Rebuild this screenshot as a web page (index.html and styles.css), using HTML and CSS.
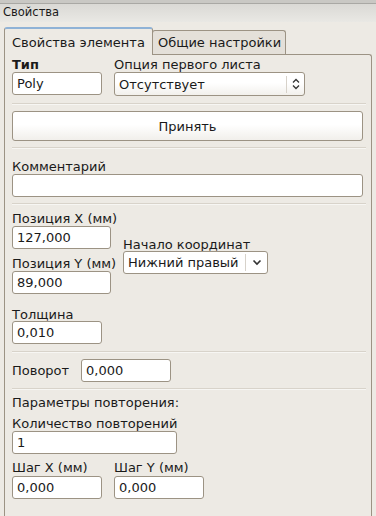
FILE: index.html
```html
<!DOCTYPE html>
<html lang="ru">
<head>
<meta charset="UTF-8" />
<meta name="viewport" content="width=device-width,initial-scale=1" />
<title>Свойства</title>
<link rel="stylesheet" href="styles.css">
</head>
<body>
  <div class="titlebar">Свойства</div>

  <div class="notebook">
    <div class="tabs">
      <div class="tab active">Свойства элемента</div>
      <div class="tab">Общие настройки</div>
    </div>

    <div class="panel">
      <!-- TYPE / FIRST SHEET -->
      <div class="row top-row">
        <div class="field">
          <label class="bold">Тип</label>
          <input type="text" class="w90" value="Poly" />
        </div>
        <div class="field">
          <label>Опция первого листа</label>
          <div class="combo w192">
            <span>Отсутствует</span>
            <span class="combo-btn">
              <svg width="8" height="12" viewBox="0 0 8 12"><path d="M1 4.5 L4 1.5 L7 4.5 M1 7.5 L4 10.5 L7 7.5" fill="none" stroke="#333" stroke-width="1.3"/></svg>
            </span>
          </div>
        </div>
      </div>

      <hr class="sep s-top" />

      <button type="button" class="btn">Принять</button>

      <hr class="sep s-btn" />

      <div class="field comment">
        <label>Комментарий</label>
        <input type="text" class="full" value="" />
      </div>

      <hr class="sep s-comment" />

      <!-- POSITION -->
      <div class="row pos-row">
        <div class="col">
          <div class="field">
            <label>Позиция X (мм)</label>
            <input type="text" class="w100" value="127,000" />
          </div>
          <div class="field pos-y">
            <label>Позиция Y (мм)</label>
            <input type="text" class="w100" value="89,000" />
          </div>
        </div>
        <div class="field origin">
          <label>Начало координат</label>
          <div class="combo w145 flat">
            <span>Нижний правый</span>
            <span class="combo-btn">
              <svg width="10" height="7" viewBox="0 0 10 7"><path d="M1.5 1.5 L5 5 L8.5 1.5" fill="none" stroke="#333" stroke-width="1.6"/></svg>
            </span>
          </div>
        </div>
      </div>

      <div class="field thick">
        <label>Толщина</label>
        <input type="text" class="w90" value="0,010" />
      </div>

      <hr class="sep s-thick" />

      <div class="row rotate">
        <label>Поворот</label>
        <input type="text" class="w90" value="0,000" />
      </div>

      <hr class="sep s-rotate" />

      <!-- REPEAT -->
      <div class="repeat">
        <div class="caption">Параметры повторения:</div>
        <div class="field count">
          <label>Количество повторений</label>
          <input type="text" class="w165" value="1" />
        </div>
        <div class="row steps">
          <div class="field">
            <label>Шаг X (мм)</label>
            <input type="text" class="w90" value="0,000" />
          </div>
          <div class="field">
            <label>Шаг Y (мм)</label>
            <input type="text" class="w90" value="0,000" />
          </div>
        </div>
      </div>
    </div>
  </div>
</body>
</html>
```

FILE: styles.css
```css
:root{
  --bg:#edeae4; --border:#9c9384; --line:#d8d3ca; --text:#1a1a1a;
}
*{box-sizing:border-box;margin:0;padding:0;
  font-family:"DejaVu Sans",Verdana,sans-serif}

body{
  background:var(--bg);
  color:var(--text);
  font-size:13px;
  width:376px;height:516px;overflow:hidden;
}

.titlebar{
  height:22px;
  border-top:3px solid #c9c8c4;
  box-shadow:inset 0 1px 0 #a9a8a4;
  background:linear-gradient(#d9d8d4,#e9e8e4);
  font-size:11.5px;
  line-height:18px;
  padding-left:3px;
}

.notebook{margin:5px 4px 0 4px}

/* tabs */
.tabs{display:flex;align-items:flex-end;height:27px}
.tab{
  border:1px solid var(--border);
  border-bottom:none;
  border-radius:3px 3px 0 0;
  background:#e4e0d9;
  height:24px;
  padding:0 4px 0 5px;
  line-height:23px;
  margin-left:-1px;
  white-space:nowrap;
}
.tab.active{
  background:var(--bg);
  height:28px;
  padding:0 7px;
  line-height:27px;
  border-top:2px solid #8fb2d6;
  margin-left:0;
  margin-bottom:-1px;
  position:relative;z-index:1;
}
.panel{
  border:1px solid var(--border);
  border-bottom:none;
  border-radius:0 3px 0 0;
  height:470px;
  padding:2px 7px 0 7px;
}

/* fields */
.row{display:flex}
.field{display:flex;flex-direction:column}
label,.caption{display:block;line-height:15px;height:15px;white-space:nowrap}
.bold{font-weight:bold}

input{
  height:23px;
  border:1px solid var(--border);
  border-radius:3px;
  background:#fff;
  font-size:13px;
  padding:0 4px;
  color:var(--text);
  outline:none;
}
.w90{width:90px}
.w100{width:99px}
.w165{width:165px}
.full{width:351px}

.combo{
  display:flex;align-items:center;justify-content:space-between;
  height:24px;
  border:1px solid var(--border);
  border-radius:3px;
  background:linear-gradient(#ffffff 45%,#f2f0ec);
  padding-left:4px;
}
.combo.flat{background:#fff;height:23px}
.combo-btn{
  display:flex;align-items:center;justify-content:center;
  border-left:1px solid #d7d2ca;
  height:17px;
}
.w192{width:191px}
.w192 .combo-btn{width:18px}
.w145{width:145px}
.w145 .combo-btn{width:22px}

.top-row{gap:12px}

.sep{
  border:none;
  border-top:1px solid var(--line);
  border-bottom:1px solid #f7f6f3;
  margin-right:-2px;
}
.s-top{margin-top:7px}

.btn{
  display:block;
  width:351px;height:30px;
  margin:6px 0 6px;
  border:1px solid var(--border);
  border-radius:3px;
  background:linear-gradient(#ffffff 45%,#f1efeb);
  font-size:13px;
  color:var(--text);
}

.comment{margin-top:10px}
.s-comment{margin-top:6px}

.pos-row{margin-top:6px;gap:12px}
.pos-row .col{width:99px;flex:none}
.pos-y{margin-top:7px}
.origin{margin-top:26px}
.origin .combo{margin-top:-1px}

.thick{margin-top:13px}
.thick input{margin-top:-1px}
.s-thick{margin-top:7px}

.rotate{align-items:center;margin-top:6px}
.rotate label{width:69px}
.s-rotate{margin-top:6px}

.repeat{margin-top:5px}
.count{margin-top:6px}
.steps{gap:12px;margin-top:6px}
.steps input{margin-top:1px}
```
